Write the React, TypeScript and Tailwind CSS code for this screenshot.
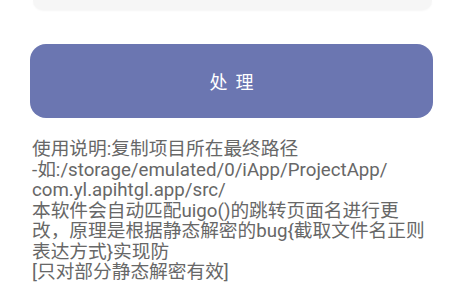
export default function App() {
  const lines = [
    "使用说明:复制项目所在最终路径",
    "-如:/storage/emulated/0/iApp/ProjectApp/",
    "com.yl.apihtgl.app/src/",
    "本软件会自动匹配uigo()的跳转页面名进行更",
    "改，原理是根据静态解密的bug{截取文件名正则",
    "表达方式}实现防",
    "[只对部分静态解密有效]",
  ];

  return (
    <div className="w-[450px] h-[294px] overflow-hidden bg-white font-['Roboto','Noto_Sans_CJK_SC',sans-serif]">
      <div className="ml-[33px] mr-[18px] h-[10px] rounded-b-[14px] bg-[#f6f6f6] shadow-[0_1px_2px_rgba(0,0,0,0.04)]" />
      <button className="mt-[34px] ml-[30px] w-[403px] h-[74px] rounded-[16px] bg-[#6b76b1] flex items-center justify-center pt-[3px]">
        <span className="text-[18px] text-white tracking-[8px] pl-[8px]">处理</span>
      </button>
      <div className="mt-[21px] ml-[32px] text-[18.7px] leading-[20.5px] text-[#676767]">
        {lines.map((l, i) => (
          <div key={i} className="whitespace-nowrap">{l}</div>
        ))}
      </div>
    </div>
  );
}
